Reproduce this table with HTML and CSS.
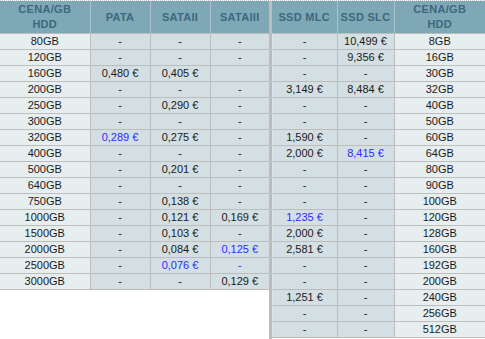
FILE: index.html
```html
<!DOCTYPE html>
<html>
<head>
<meta charset="utf-8">
<link rel="stylesheet" href="styles.css">
</head>
<body>
<div class="wrap">
  <table class="tbl left">
    <colgroup><col class="c-size"><col class="c-58"><col class="c-60"><col class="c-58b"></colgroup>
    <thead>
      <tr><th>CENA/GB<br>HDD</th><th>PATA</th><th>SATAII</th><th>SATAIII</th></tr>
    </thead>
    <tbody>
      <tr><td class="sz">80GB</td><td>-</td><td>-</td><td>-</td></tr>
      <tr><td class="sz">120GB</td><td>-</td><td>-</td><td>-</td></tr>
      <tr><td class="sz">160GB</td><td>0,480 €</td><td>0,405 €</td><td></td></tr>
      <tr><td class="sz">200GB</td><td>-</td><td>-</td><td>-</td></tr>
      <tr><td class="sz">250GB</td><td>-</td><td>0,290 €</td><td>-</td></tr>
      <tr><td class="sz">300GB</td><td>-</td><td>-</td><td>-</td></tr>
      <tr><td class="sz">320GB</td><td class="blue">0,289 €</td><td>0,275 €</td><td>-</td></tr>
      <tr><td class="sz">400GB</td><td>-</td><td>-</td><td>-</td></tr>
      <tr><td class="sz">500GB</td><td>-</td><td>0,201 €</td><td>-</td></tr>
      <tr><td class="sz">640GB</td><td>-</td><td>-</td><td>-</td></tr>
      <tr><td class="sz">750GB</td><td>-</td><td>0,138 €</td><td>-</td></tr>
      <tr><td class="sz">1000GB</td><td>-</td><td>0,121 €</td><td>0,169 €</td></tr>
      <tr><td class="sz">1500GB</td><td>-</td><td>0,103 €</td><td>-</td></tr>
      <tr><td class="sz">2000GB</td><td>-</td><td>0,084 €</td><td class="blue">0,125 €</td></tr>
      <tr><td class="sz">2500GB</td><td>-</td><td class="blue">0,076 €</td><td class="blue">-</td></tr>
      <tr><td class="sz">3000GB</td><td>-</td><td>-</td><td>0,129 €</td></tr>
    </tbody>
  </table>
  <div class="sep"></div>
  <table class="tbl right">
    <colgroup><col class="c-mlc"><col class="c-slc"><col class="c-size2"></colgroup>
    <thead>
      <tr><th>SSD MLC</th><th>SSD SLC</th><th>CENA/GB<br>HDD</th></tr>
    </thead>
    <tbody>
      <tr><td>-</td><td>10,499 €</td><td class="sz">8GB</td></tr>
      <tr><td>-</td><td>9,356 €</td><td class="sz">16GB</td></tr>
      <tr><td>-</td><td>-</td><td class="sz">30GB</td></tr>
      <tr><td>3,149 €</td><td>8,484 €</td><td class="sz">32GB</td></tr>
      <tr><td>-</td><td>-</td><td class="sz">40GB</td></tr>
      <tr><td>-</td><td>-</td><td class="sz">50GB</td></tr>
      <tr><td>1,590 €</td><td>-</td><td class="sz">60GB</td></tr>
      <tr><td>2,000 €</td><td class="blue">8,415 €</td><td class="sz">64GB</td></tr>
      <tr><td>-</td><td>-</td><td class="sz">80GB</td></tr>
      <tr><td>-</td><td>-</td><td class="sz">90GB</td></tr>
      <tr><td>-</td><td>-</td><td class="sz">100GB</td></tr>
      <tr><td class="blue">1,235 €</td><td>-</td><td class="sz">120GB</td></tr>
      <tr><td>2,000 €</td><td>-</td><td class="sz">128GB</td></tr>
      <tr><td>2,581 €</td><td>-</td><td class="sz">160GB</td></tr>
      <tr><td>-</td><td>-</td><td class="sz">192GB</td></tr>
      <tr><td>-</td><td>-</td><td class="sz">200GB</td></tr>
      <tr><td>1,251 €</td><td>-</td><td class="sz">240GB</td></tr>
      <tr><td>-</td><td>-</td><td class="sz">256GB</td></tr>
      <tr><td>-</td><td>-</td><td class="sz">512GB</td></tr>
    </tbody>
  </table>
</div>
</body>
</html>
```

FILE: styles.css
```css
html, body {
  margin: 0;
  padding: 0;
  background: #ffffff;
}
body {
  font-family: "Liberation Sans", Arial, sans-serif;
  font-size: 11px;
  color: #1a1a1a;
}
.wrap {
  display: flex;
  align-items: flex-start;
  width: 485px;
  border-top: 1px dotted #c8c8c8;
  box-sizing: border-box;
}
.tbl {
  border-collapse: collapse;
  table-layout: fixed;
}
.left { width: 269px; }
.right { width: 213px; }
.c-size { width: 90px; }
.c-58 { width: 60px; }
.c-60 { width: 60px; }
.c-58b { width: 59px; }
.c-mlc { width: 65px; }
.c-slc { width: 57px; }
.c-size2 { width: 91px; }
.sep {
  width: 3px;
  align-self: stretch;
  height: 338px;
  background: #bcbcbc;
}
.tbl th {
  height: 32px;
  padding: 0;
  background: #7fa8b7;
  color: #3b687d;
  font-weight: bold;
  font-size: 11px;
  line-height: 15px;
  letter-spacing: 0.3px;
  text-align: center;
  vertical-align: middle;
  border-right: 1px solid #a9c2cb;
  border-bottom: 1px solid #bdbdbd;
}
.tbl th:last-child { border-right: none; }
.tbl td {
  height: 15px;
  padding: 0;
  background: #d3dfe3;
  text-align: center;
  vertical-align: middle;
  line-height: 15px;
  border: 1px solid #bdbdbd;
  white-space: nowrap;
}
.tbl td.sz { background: #e6eef0; }
.left td:first-child { border-left: none; }
.right td:last-child { border-right: none; }
.left td:last-child { border-right: none; }
.right td:first-child { border-left: 1px solid #dfe7ea; }
.blue { color: #2b2bff; }
```
